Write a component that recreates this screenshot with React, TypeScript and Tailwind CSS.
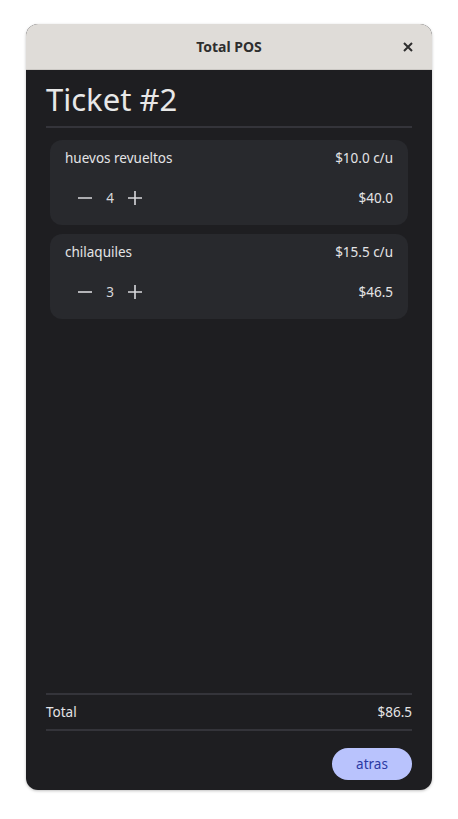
const items = [
  { name: 'huevos revueltos', price: '$10.0 c/u', qty: 4, total: '$40.0' },
  { name: 'chilaquiles', price: '$15.5 c/u', qty: 3, total: '$46.5' },
];

function Minus() {
  return (
    <svg width="16" height="16" viewBox="0 0 16 16" className="block">
      <path d="M1 8h14" stroke="currentColor" strokeWidth="1.6" />
    </svg>
  );
}

function Plus() {
  return (
    <svg width="16" height="16" viewBox="0 0 16 16" className="block">
      <path d="M1 8h14M8 1v14" stroke="currentColor" strokeWidth="1.6" />
    </svg>
  );
}

export default function App() {
  return (
    <div
      className="min-h-[819px] bg-white pt-6 px-[26px]"
      style={{ fontFamily: '"Noto Sans", sans-serif' }}
    >
      <div className="w-[406px] h-[766px] rounded-xl overflow-hidden flex flex-col bg-[#1e1e21] shadow-[0_1px_3px_rgba(0,0,0,0.25)]">
        <div className="h-[46px] shrink-0 bg-[#dfdcd8] relative flex items-center justify-center border-b border-[#cbc8c4]">
          <span className="text-[14px] font-bold text-[#2e2e2e]">Total POS</span>
          <svg
            width="10"
            height="10"
            viewBox="0 0 10 10"
            className="absolute right-[19px] top-[18px] text-[#2e2e2e]"
          >
            <path d="M1 1l8 8M9 1l-8 8" stroke="currentColor" strokeWidth="2" />
          </svg>
        </div>
        <div className="flex-1 flex flex-col px-5 pt-[9px] pb-[10px]">
          <h1 className="text-[31px] leading-[40px] text-[#e8e8e8] pb-[7px] border-b-2 border-[#34343a]">
            Ticket #2
          </h1>
          <div className="flex flex-col gap-[9px] px-1 pt-[12px]">
            {items.map((it) => (
              <div
                key={it.name}
                className="h-[85px] rounded-xl bg-[#28292d] px-[15px] pt-[8px] text-[13.5px] text-[#e4e4e6]"
              >
                <div className="flex justify-between leading-5">
                  <span>{it.name}</span>
                  <span>{it.price}</span>
                </div>
                <div className="flex justify-between items-center mt-[20px] h-5">
                  <div className="flex items-center pl-[12px] text-[#d8d8dc]">
                    <Minus />
                    <span className="w-[34px] text-center">{it.qty}</span>
                    <Plus />
                  </div>
                  <span>{it.total}</span>
                </div>
              </div>
            ))}
          </div>
          <div className="flex-1" />
          <div className="border-t-2 border-b-2 border-[#34343a] h-[38px] flex items-center justify-between text-[13.5px] text-[#e4e4e6]">
            <span>Total</span>
            <span>$86.5</span>
          </div>
          <div className="flex justify-end pt-[17px]">
            <button className="w-20 h-8 rounded-full bg-[#b9c3fd] text-[#2b3aa3] text-[13.5px]">
              atras
            </button>
          </div>
        </div>
      </div>
    </div>
  );
}
